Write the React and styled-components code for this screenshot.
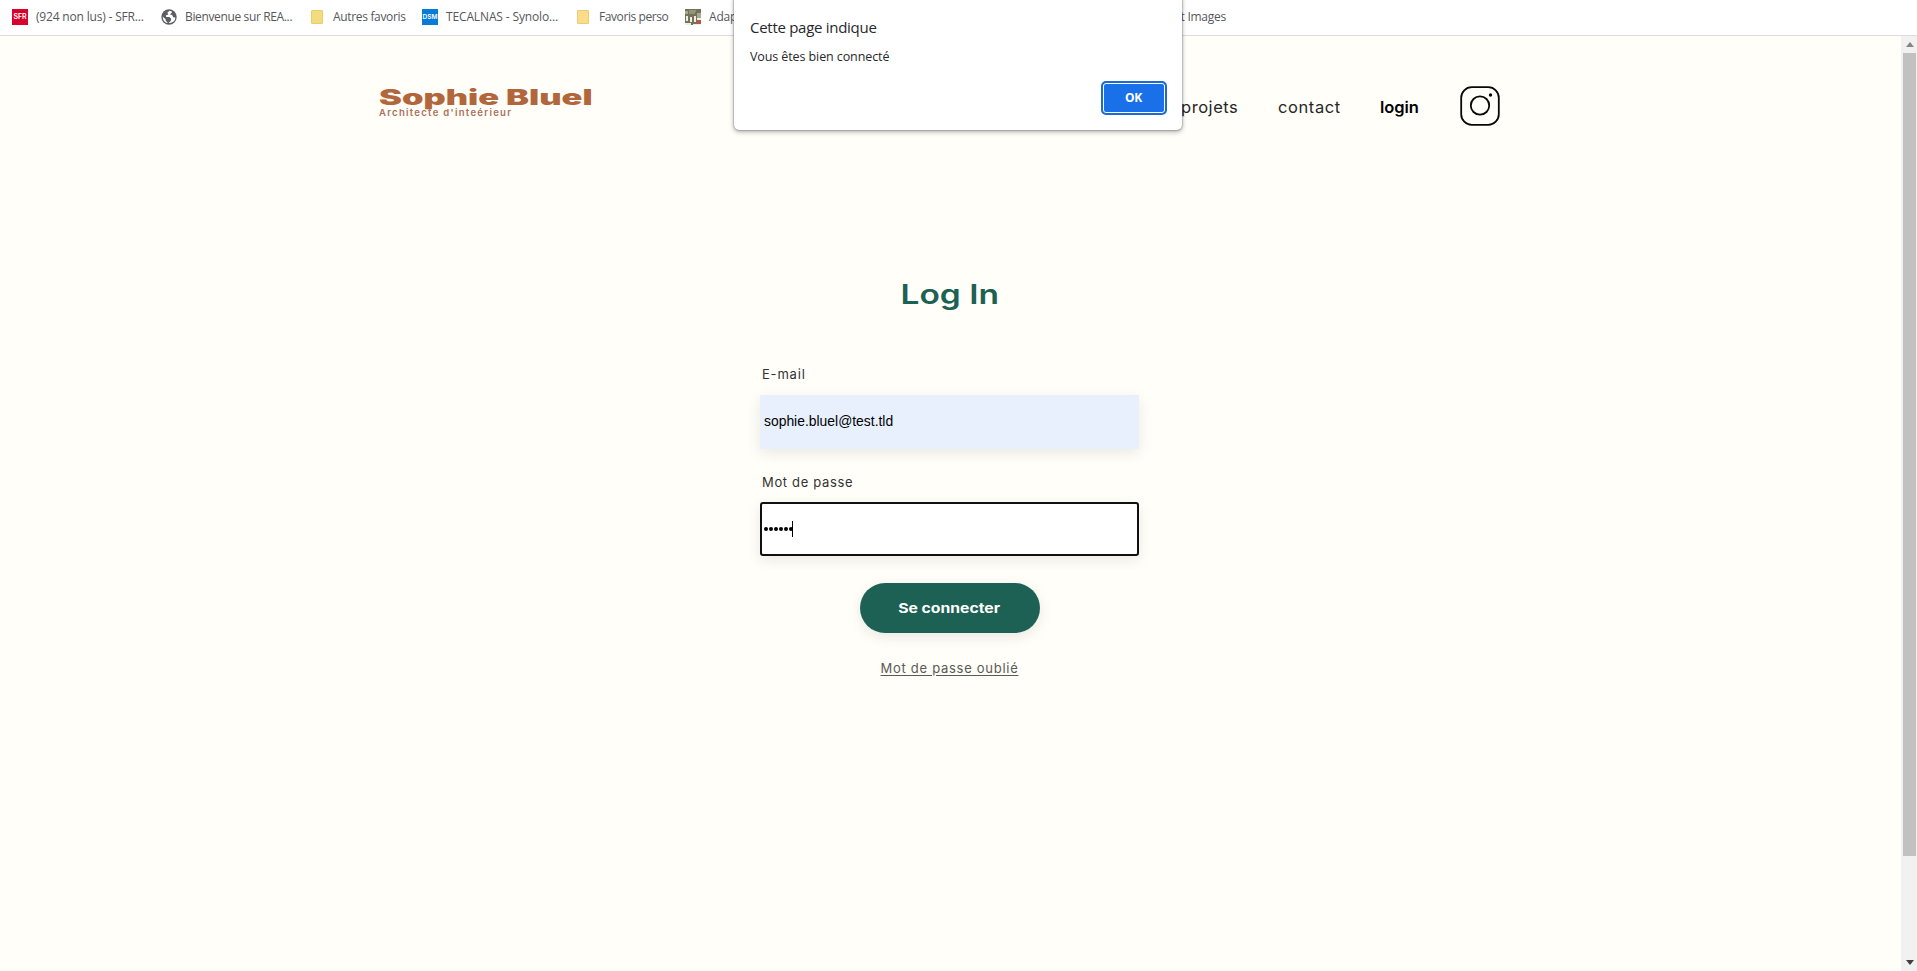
import React from 'react';
import styled, { createGlobalStyle } from 'styled-components';

const Global = createGlobalStyle`
  * { box-sizing: border-box; }
  body { margin: 0; overflow: hidden; background: #fffef8; }
`;
const Screen = styled.div`
  height: 971px; width: 1917px; position: relative; overflow: hidden;
  display: flex; flex-direction: column;
  font-family: Inter, "Liberation Sans", sans-serif;
`;
const Bookmarks = styled.nav`
  flex: none; height: 36px; padding: 0 0 2px 12px; display: flex; align-items: center;
  background: #fff; border-bottom: 1px solid #dedbdc;
`;
const Bookmark = styled.div`
  width: ${p => p.$w}px; flex: none; display: flex; align-items: center; gap: ${p => p.$gap || 8}px;
  font: 12px "Open Sans", "Noto Sans", sans-serif; letter-spacing: ${p => p.$ls || 0}px;
  color: #55575b; white-space: nowrap;
  svg { flex: none; display: block; }
`;
const LastBookmark = styled(Bookmark)`justify-content: flex-end;`;
const Tile = styled.span`
  width: 16px; height: 16px; flex: none; display: flex; align-items: center; justify-content: center;
  overflow: hidden; background: ${p => p.$bg}; color: #fff; letter-spacing: 0;
  font: 600 ${p => p.$size}px Inter, sans-serif;
`;
const Folder = styled.span`
  width: 12px; height: 14px; flex: none; background: ${p => p.$bg};
  border: 1px solid ${p => p.$edge}; border-radius: 1px;
`;
const Viewport = styled.div`flex: 1; display: flex; min-height: 0;`;
const Page = styled.main`flex: 1; padding: 0 381px 0 379px; background: #fffef8;`;
const Header = styled.header`height: 142px; display: flex; justify-content: space-between;`;
const Brand = styled.div`padding-top: 49px; color: #b1663c;`;
const Stretch = styled.span`
  display: inline-block; white-space: nowrap; transform: scaleX(${p => p.$x});
  transform-origin: ${p => p.$from || 'left'} center;
`;
const BrandName = styled.h1`margin: 0; height: 23px; font-size: 21px; line-height: 26px; font-weight: 900;`;
const BrandRole = styled.p`
  margin: 0; font-size: 9.5px; line-height: 10px; font-weight: 600;
  letter-spacing: 1.3px; color: #a9705b; white-space: nowrap;
`;
const Menu = styled.nav`
  display: flex; align-items: flex-start; padding: 49px 20px 0 0; color: #1b1b1b;
  font-size: 16.5px; line-height: 45px;
`;
const MenuItem = styled.span`
  width: ${p => p.$w}px; font-weight: ${p => (p.$active ? 600 : 400)};
  letter-spacing: ${p => p.$ls}px; color: ${p => (p.$active ? '#000' : '#262626')};
`;
const Social = styled.span`padding-top: 1px; svg { display: block; }`;
const Login = styled.section`display: flex; flex-direction: column; align-items: center;`;
const Title = styled.h2`
  margin: 97px 0 0; height: 40px; line-height: 40px; font-size: 27px; font-weight: 600; color: #1d6154;
`;
const Form = styled.form`width: 379px; margin-top: 49px; display: flex; flex-direction: column;`;
const Label = styled.label`
  height: 20px; margin-top: ${p => p.$top || 0}px; padding-left: 2px; font-size: 13px; line-height: 20px;
  font-weight: 400; letter-spacing: ${p => p.$ls}px; color: #333;
`;
const Field = styled.div`
  height: 54px; margin-top: ${p => p.$top}px; padding: ${p => (p.$focus ? '0 0 0 2px' : '0 0 2px 4px')};
  display: flex; align-items: center; font: 13.9px "Liberation Sans", Arial, sans-serif; color: #000;
  background: ${p => (p.$focus ? '#fff' : '#e8f0fe')};
  border: ${p => (p.$focus ? '2px solid #101010' : '0')}; border-radius: ${p => (p.$focus ? 3 : 0)}px;
  box-shadow: 0 4px 14px rgba(0, 0, 0, .09);
`;
const Dots = styled.span`display: flex; gap: 1px;`;
const Dot = styled.i`width: 4px; height: 4px; border-radius: 50%; background: #000;`;
const Caret = styled.i`width: 1px; height: 16px; background: #000; margin-left: -1px;`;
const Submit = styled.button`
  width: 180px; height: 50px; margin: 27px auto 0; padding: 0; border: 0; border-radius: 25px;
  background: #1d6154; color: #fff; font: 700 13px Inter, sans-serif;
  box-shadow: 0 4px 14px rgba(0, 0, 0, .09);
`;
const Forgot = styled.a`
  margin: 25px auto 0; font-size: 13px; line-height: 20px; letter-spacing: .72px; color: #5a5a54;
  text-decoration: underline; white-space: nowrap; text-underline-offset: 2px;
`;
const Scrollbar = styled.div`
  width: 16px; flex: none; padding: 0 1px 0 2px; display: flex; flex-direction: column;
  align-items: center; background: #f1f1f1;
`;
const Arrow = styled.span`height: 17px; display: flex; align-items: center;`;
const Thumb = styled.div`width: 13px; height: 803px; background: #c1c1c1; margin-bottom: auto;`;
const Dialog = styled.div`
  position: absolute; left: 734px; top: -6px; width: 448px; height: 136px; padding: 22px 15px 0 16px;
  display: flex; flex-direction: column; background: #fff; border-radius: 5px;
  box-shadow: 0 0 2px rgba(0, 0, 0, .55), 0 2px 5px rgba(0, 0, 0, .3);
  font-family: "Open Sans", "Noto Sans", sans-serif; color: #27282b;
`;
const DialogTitle = styled.div`font-size: 15px; line-height: 22px; letter-spacing: -.28px;`;
const DialogText = styled.div`margin-top: 9px; font-size: 12.5px; line-height: 20px; letter-spacing: -.1px;`;
const Ok = styled.button`
  width: 66px; height: 34px; margin: 14px 0 0 auto; padding: 0 1px 1px 0; border: 2px solid #1b6bd6;
  border-radius: 5px; box-shadow: inset 0 0 0 1px #fff; background: #1a70e8; color: #fff;
  font: 700 12px "Open Sans", sans-serif; letter-spacing: -.3px;
`;

const Globe = () => (
  <svg width="16" height="16" viewBox="0 0 15 15">
    <circle cx="7.5" cy="7.5" r="7.2" fill="#5b5e63" />
    <path d="M8 1.7 5.9 3.6l1 1.5-2.5 1 .6 1.3h2.8l1.8 1.7-.5 2.1-2 2C11.2 13.3 13.4 11 13.4 8l-2-.3-.9-2-2.2-.6 1.8-1.5V2.3ZM1.6 7.2l2.6 2.2.4 1.7 1.7 2.1C3.7 12.8 1.7 10.5 1.6 7.2Z" fill="#fff" />
  </svg>
);
const Garden = () => (
  <svg width="16" height="16" viewBox="0 0 16 16">
    <path fill="#737359" d="M0 0h16v16H0z" />
    <path fill="#aaa98f" d="M0 2h3v3H0zM12 4h4v5h-4z" />
    <path d="M4 2h7M4 4h6" stroke="#c4c8ad" strokeWidth=".8" />
    <path d="M1 7h2v5H1zM5 8h2v5H5zM9 7h2v6H9zM0 14h6v2H0zM8 15h8v1H8zM12 9h4v2h-4z" fill="#f0eee4" />
    <path fill="#d44747" d="M11 12h5v2h-5z" />
  </svg>
);
const Instagram = () => (
  <svg width="40" height="40" viewBox="0 0 40 40" fill="none" stroke="#080808" strokeWidth="1.8">
    <rect x="1.2" y="1.2" width="37.6" height="37.6" rx="10.5" />
    <circle cx="20" cy="19.5" r="9.2" />
    <circle cx="30.5" cy="9" r="1.7" fill="#080808" stroke="none" />
  </svg>
);

export default function App() {
  return (
    <Screen>
      <Global />
      <Bookmarks>
        <Bookmark $w={149} $ls={-0.18}><Tile $bg="#d9002b" $size={7}>SFR</Tile>(924 non lus) - SFR...</Bookmark>
        <Bookmark $w={150} $ls={-0.36}><Globe />Bienvenue sur REA...</Bookmark>
        <Bookmark $w={111} $gap={10} $ls={-0.33}><Folder $bg="#f3dc7f" $edge="#e8cf6c" />Autres favoris</Bookmark>
        <Bookmark $w={155} $ls={-0.14}><Tile $bg="#087bd8" $size={6.5}>DSM</Tile>TECALNAS - Synolo...</Bookmark>
        <Bookmark $w={108} $gap={10} $ls={-0.42}><Folder $bg="#fbdc8b" $edge="#efca73" />Favoris perso</Bookmark>
        <Bookmark $w={100} $ls={-0.2}><Garden />Adapter</Bookmark>
        <LastBookmark $w={441} $ls={-0.25}>Import Images</LastBookmark>
      </Bookmarks>
      <Viewport>
        <Page>
          <Header>
            <Brand>
              <BrandName><Stretch $x={1.64}>Sophie Bluel</Stretch></BrandName>
              <BrandRole>Architecte d'inteérieur</BrandRole>
            </Brand>
            <Menu>
              <MenuItem $w={97} $ls={0.55}>projets</MenuItem>
              <MenuItem $w={102} $ls={0.6}>contact</MenuItem>
              <MenuItem $w={80} $ls={-0.05} $active>login</MenuItem>
              <Social><Instagram /></Social>
            </Menu>
          </Header>
          <Login>
            <Title><Stretch $x={1.24} $from="center">Log In</Stretch></Title>
            <Form>
              <Label $ls={0.8}>E-mail</Label>
              <Field $top={11}>sophie.bluel@test.tld</Field>
              <Label $top={23} $ls={0.65}>Mot de passe</Label>
              <Field $top={10} $focus>
                <Dots>{[0, 1, 2, 3, 4, 5].map(i => <Dot key={i} />)}</Dots><Caret />
              </Field>
              <Submit type="button"><Stretch $x={1.21} $from="center">Se connecter</Stretch></Submit>
              <Forgot>Mot de passe oublié</Forgot>
            </Form>
          </Login>
        </Page>
        <Scrollbar>
          <Arrow><svg width="8" height="5"><path d="M0 5 4 0l4 5Z" fill="#858585" /></svg></Arrow>
          <Thumb />
          <Arrow><svg width="8" height="5"><path d="M0 0h8L4 5Z" fill="#404040" /></svg></Arrow>
        </Scrollbar>
      </Viewport>
      <Dialog>
        <DialogTitle>Cette page indique</DialogTitle>
        <DialogText>Vous êtes bien connecté</DialogText>
        <Ok>OK</Ok>
      </Dialog>
    </Screen>
  );
}
